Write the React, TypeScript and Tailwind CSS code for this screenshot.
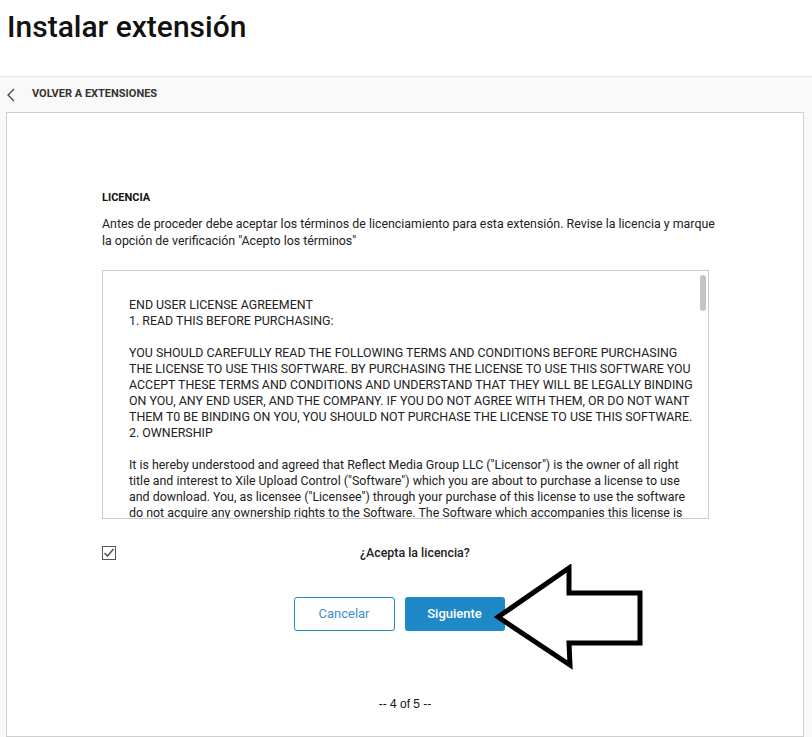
import React from "react"

const license = [
  "END USER LICENSE AGREEMENT",
  "1. READ THIS BEFORE PURCHASING:",
  "",
  "YOU SHOULD CAREFULLY READ THE FOLLOWING TERMS AND CONDITIONS BEFORE PURCHASING THE LICENSE TO USE THIS SOFTWARE. BY PURCHASING THE LICENSE TO USE THIS SOFTWARE YOU ACCEPT THESE TERMS AND CONDITIONS AND UNDERSTAND THAT THEY WILL BE LEGALLY BINDING ON YOU, ANY END USER, AND THE COMPANY. IF YOU DO NOT AGREE WITH THEM, OR DO NOT WANT THEM T0 BE BINDING ON YOU, YOU SHOULD NOT PURCHASE THE LICENSE TO USE THIS SOFTWARE.",
  "2. OWNERSHIP",
  "",
  'It is hereby understood and agreed that Reflect Media Group LLC ("Licensor") is the owner of all right title and interest to Xile Upload Control ("Software") which you are about to purchase a license to use and download. You, as licensee ("Licensee") through your purchase of this license to use the software do not acquire any ownership rights to the Software. The Software which accompanies this license is licensed, not sold, to you.',
]

const App: React.FunctionComponent = () => {
  return (
    <div className="relative min-h-[737px] bg-white font-['Roboto',sans-serif] text-[#222]">
      <h1 className="h-[76px] pl-[7px] pt-[7px] text-[30px] font-medium leading-[40px] text-[#111]">
        Instalar extensión
      </h1>
      <div className="border-t border-[#e6e6e6] bg-[#f9f9f9] pb-px">
        <div className="flex h-[35px] items-center">
          <svg width="8" height="14" viewBox="0 0 8 14" className="ml-[7px]">
            <path d="M7 1 1 7l6 6" fill="none" stroke="#444" strokeWidth="1.3" />
          </svg>
          <span className="ml-[17px] text-[11px] font-bold text-[#333]">VOLVER A EXTENSIONES</span>
        </div>
        <div className="ml-[6px] w-[798px] border border-[#cfcfcf] bg-white pb-[23px]">
          <div className="px-[95px] pt-[77px]">
            <div className="text-[11px] font-bold leading-[16px] text-[#111]">LICENCIA</div>
            <p className="mt-[9px] w-[618px] text-[12.4px] leading-[17px] text-[#222]">
              Antes de proceder debe aceptar los términos de licenciamiento para esta extensión. Revise la licencia y marque
              la opción de verificación "Acepto los términos"
            </p>
            <div className="relative mt-[21px] h-[249px] w-[607px] overflow-hidden border border-[#cccccc]">
              <div className="pl-[26px] pr-[11px] pt-[26px] text-[12.4px] leading-[16px] text-[#222]">
                {license.map((l, i) =>
                  l === "" ? <div key={i} className="h-[16px]" /> : <div key={i}>{l}</div>
                )}
              </div>
              <div className="absolute right-[2px] top-[4px] h-[36px] w-[6px] rounded-full bg-[#c4c4c4]" />
            </div>
            <div className="mt-[25px] flex items-center">
              <svg width="14" height="14" viewBox="0 0 14 14">
                <rect x="0.5" y="0.5" width="13" height="13" fill="#fff" stroke="#555" />
                <path d="M2.5 7 5.5 10 11.5 3" fill="none" stroke="#555" strokeWidth="1.6" />
              </svg>
              <span className="ml-[244px] text-[12.4px] font-medium text-[#222]">¿Acepta la licencia?</span>
            </div>
            <div className="mt-[34px] flex justify-center gap-[10px] pr-[12px]">
              <button className="h-[34px] w-[101px] rounded-[3px] border border-[#1f88c6] bg-white text-[13px] text-[#3f8fca]">
                Cancelar
              </button>
              <button className="h-[34px] w-[100px] rounded-[3px] bg-[#1f88c6] text-[13px] font-medium text-white">
                Siguiente
              </button>
            </div>
          </div>
          <div className="mt-[64px] text-center font-['Liberation_Sans',sans-serif] text-[12px] text-[#111]">
            -- 4 of 5 --
          </div>
        </div>
      </div>
      <svg width="150" height="106" viewBox="0 0 150 106" className="absolute left-[494px] top-[564px]">
        <path
          d="M4 53 75 4 75 29 146 29 146 79 75 79 76 101Z"
          fill="#fff"
          stroke="#000"
          strokeWidth="5"
          strokeLinejoin="miter"
        />
      </svg>
    </div>
  )
}

export default App
